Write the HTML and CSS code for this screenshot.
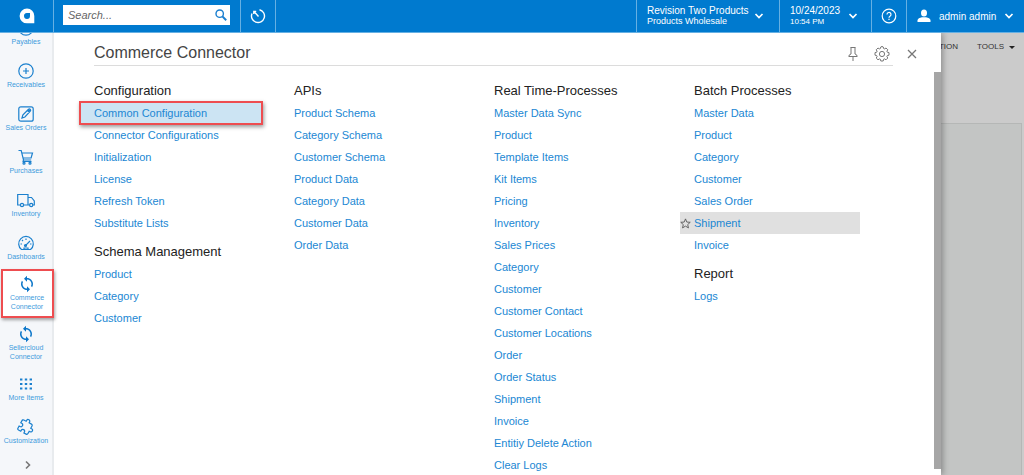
FILE: index.html
```html
<!DOCTYPE html>
<html lang="en">
<head>
<meta charset="utf-8">
<title>Commerce Connector</title>
<link rel="stylesheet" href="styles.css">
</head>
<body>
<svg class="defs" aria-hidden="true">
  <symbol id="sync" viewBox="0 0 24 24"><path stroke="none" fill="currentColor" d="M12 4V1L8 5l4 4V6c3.310 0 6 2.690 6 6 0 1.010-.25 1.970-.7 2.800l1.460 1.460C19.540 15.030 20 13.570 20 12c0-4.420-3.580-8-8-8zm0 14c-3.310 0-6-2.690-6-6 0-1.010.25-1.970.7-2.800L5.240 7.740C4.460 8.970 4 10.430 4 12c0 4.420 3.580 8 8 8v3l4-4-4-4v3z"/></symbol>
  <symbol id="chevron" viewBox="0 0 10 8"><path d="M1.500 2 5 5.500 8.500 2" fill="none" stroke="currentColor" stroke-width="1.700"/></symbol>
</svg>
<header class="topbar">
  <a class="logo" href="#" aria-label="Home"><svg width="16" height="16" viewBox="0 0 16 16"><path fill="#fff" fill-rule="evenodd" d="M8 .5A7.300 7.300 0 0 1 15.300 8v7.300H8A7.400 7.400 0 0 1 8 .5zM7.800 5a3 3 0 1 0 3.200 3V5z"/></svg></a>
  <form class="search">
    <input type="search" placeholder="Search..." aria-label="Search">
    <button type="button" aria-label="Search"><svg width="12" height="12" viewBox="0 0 12 12"><circle cx="4.700" cy="4.700" r="3.700" fill="none" stroke="currentColor" stroke-width="1.400"/><path d="m7.400 7.400 3.800 3.800" stroke="currentColor" stroke-width="2"/></svg></button>
  </form>
  <button class="cell history" type="button" aria-label="Recent"><svg width="16" height="16" viewBox="0 0 16 16" fill="none" stroke="currentColor" stroke-width="1.400"><path d="M9.500 1.700A6.500 6.500 0 1 1 2 5.500M8.500 8.500 4 3.500M3.800 6V3.400h2.400"/></svg></button>
  <button class="cell company" type="button"><span class="stack"><span>Revision Two Products</span><small class="branch">Products Wholesale</small></span><svg width="10" height="8"><use href="#chevron"/></svg></button>
  <button class="cell date" type="button"><span class="stack"><span>10/24/2023</span><small>10:54 PM</small></span><svg width="10" height="8"><use href="#chevron"/></svg></button>
  <button class="cell help" type="button" aria-label="Help"><svg width="16" height="16" viewBox="0 0 16 16" fill="none" stroke="currentColor" stroke-width="1.200"><circle cx="8" cy="8" r="6.800"/><path d="M6 6.500a2 2 0 1 1 3 1.700Q8 8.800 8 9.700M8 10.700V12"/></svg></button>
  <button class="cell user" type="button"><svg width="14" height="14" viewBox="0 0 14 14" fill="currentColor"><ellipse cx="7" cy="4" rx="3" ry="3.500"/><path d="M.5 13v-2Q1 9 5 8.200h4q4 .8 4.500 2.800v2z"/></svg><span>admin admin</span><svg width="10" height="8"><use href="#chevron"/></svg></button>
</header>
<div class="body">
  <nav class="sidebar" aria-label="Workspaces">
    <a class="item" href="#"><svg viewBox="0 0 18 18"><circle cx="9" cy="9" r="7.200"/><path d="M6 9h6"/></svg>Payables</a>
    <a class="item" href="#"><svg viewBox="0 0 18 18"><circle cx="9" cy="9" r="7.200"/><path d="M6 9h6M9 6v6"/></svg>Receivables</a>
    <a class="item" href="#"><svg viewBox="0 0 18 18"><rect x="1.800" y="1.800" width="14.400" height="14.400" rx="2"/><path d="m5 13 .8-3L11.500 4.300q1-.8 1.800 0t0 1.800L7.900 12zM10.500 5.500l2 2M11.500 4.500l2 2"/></svg>Sales Orders</a>
    <a class="item" href="#"><svg viewBox="0 0 18 18"><path d="M1.500 2.500h2.700L6.500 12h7.700M4.700 5h10.800l-1.400 5H6M6.500 12l-.4 1.500h8.400"/><circle cx="7" cy="15.200" r="1"/><circle cx="13" cy="15.200" r="1"/></svg>Purchases</a>
    <a class="item" href="#"><svg viewBox="0 0 18 18"><path d="M3.500 14H.7V3.500H11V14H6.500M11 6.500h3.500l2.800 3.500v4h-1.300M11 14h1.500"/><circle cx="5" cy="14" r="1.600"/><circle cx="14.200" cy="14" r="1.600"/></svg>Inventory</a>
    <a class="item" href="#"><svg viewBox="0 0 18 18"><path d="M4.500 15.500a7.300 7.300 0 1 1 9 0zM7 15.500v-1.500h4v1.500M8.200 11.800 13 7M3.500 10H5M9 4.500V6M5 6l1 1M13 10h1.500"/><circle cx="8.500" cy="11.500" r="1"/></svg>Dashboards</a>
    <a class="item current" href="#" aria-current="page"><svg><use href="#sync"/></svg>Commerce Connector</a>
    <a class="item" href="#"><svg><use href="#sync"/></svg>Sellercloud Connector</a>
    <a class="item" href="#"><svg viewBox="0 0 18 18"><path d="M3 4.500h12M3 9h12M3 13.500h12" stroke-width="2.200" stroke-dasharray="2.400"/></svg>More Items</a>
    <a class="item" href="#"><svg viewBox="-2 -1 27 27"><path transform="rotate(28 12 12)" stroke-width="1.800" d="M20.500 11H19V7c0-1.100-.9-2-2-2h-4V3.500a2.500 2.500 0 0 0-5 0V5H4c-1.100 0-2 .9-2 2v3.800h1.500a2.700 2.700 0 0 1 0 5.400H2V20c0 1.100.9 2 2 2h3.800v-1.500a2.700 2.700 0 0 1 5.400 0V22H17c1.100 0 2-.9 2-2v-4h1.500a2.500 2.500 0 0 0 0-5z"/></svg>Customization</a>
    <button class="expand" type="button" aria-label="Expand"><svg width="8" height="10" viewBox="0 0 8 10"><path d="m2 1.500 3.500 3.500L2 8.500" fill="none" stroke="currentColor" stroke-width="1.600"/></svg></button>
  </nav>
  <main class="page">
    <div class="page-menu"><button type="button">CUSTOMIZATION</button><button type="button">TOOLS <span class="caret"></span></button></div>
    <div class="page-content"></div>
    <section class="drawer">
      <div class="drawer-head">
        <h1>Commerce Connector</h1>
        <button class="tool" type="button" aria-label="Pin"><svg width="16" height="16" viewBox="0 0 16 16"><path d="M5.500 1.500h5M6 1.500V8Q3.800 8.500 3.800 10.500h8.400Q12.200 8.500 10 8V1.500M8 10.500V15"/></svg></button>
        <button class="tool" type="button" aria-label="Settings"><svg width="16" height="16" viewBox="0 0 16 16"><path d="m6.700 1 .3-.3h2l.3.300.3 1.500 1 .4 1.400-.9 1.800 1.800-.9 1.400.4 1 1.700.4v2.600l-1.700.4-.4 1 .9 1.400-1.800 1.800-1.400-.9-1 .4-.4 1.700H6.800l-.4-1.700-1-.4-1.400.9L2.200 12l.9-1.400-.4-1L1 9.200V6.600l1.700-.4.4-1-.9-1.400L4 2l1.400.9 1-.4z"/><circle cx="8" cy="8" r="2.600"/></svg></button>
      </div>
      <button class="close" type="button" aria-label="Close"><svg width="10" height="10" viewBox="0 0 10 10"><path d="m1 1 8 8M9 1 1 9" stroke="currentColor" stroke-width="1.300"/></svg></button>
      <div class="columns">
        <div class="column">
          <section><h2>Configuration</h2><ul>
            <li class="marked"><a href="#">Common Configuration</a></li><li><a href="#">Connector Configurations</a></li><li><a href="#">Initialization</a></li><li><a href="#">License</a></li><li><a href="#">Refresh Token</a></li><li><a href="#">Substitute Lists</a></li></ul></section>
          <section><h2>Schema Management</h2><ul>
            <li><a href="#">Product</a></li><li><a href="#">Category</a></li><li><a href="#">Customer</a></li></ul></section>
        </div>
        <div class="column">
          <section><h2>APIs</h2><ul>
            <li><a href="#">Product Schema</a></li><li><a href="#">Category Schema</a></li><li><a href="#">Customer Schema</a></li><li><a href="#">Product Data</a></li><li><a href="#">Category Data</a></li><li><a href="#">Customer Data</a></li><li><a href="#">Order Data</a></li></ul></section>
        </div>
        <div class="column">
          <section><h2>Real Time-Processes</h2><ul>
            <li><a href="#">Master Data Sync</a></li><li><a href="#">Product</a></li><li><a href="#">Template Items</a></li><li><a href="#">Kit Items</a></li><li><a href="#">Pricing</a></li><li><a href="#">Inventory</a></li><li><a href="#">Sales Prices</a></li><li><a href="#">Category</a></li><li><a href="#">Customer</a></li><li><a href="#">Customer Contact</a></li><li><a href="#">Customer Locations</a></li><li><a href="#">Order</a></li><li><a href="#">Order Status</a></li><li><a href="#">Shipment</a></li><li><a href="#">Invoice</a></li><li><a href="#">Entitiy Delete Action</a></li><li><a href="#">Clear Logs</a></li></ul></section>
        </div>
        <div class="column">
          <section><h2>Batch Processes</h2><ul>
            <li><a href="#">Master Data</a></li><li><a href="#">Product</a></li><li><a href="#">Category</a></li><li><a href="#">Customer</a></li><li><a href="#">Sales Order</a></li><li class="hovered"><button class="star" type="button" aria-label="Add to favorites"><svg width="11" height="11" viewBox="0 0 10 10"><path d="m5 .8 1.200 2.900 3.100.2L7 6l.7 3L5 7.400 2.300 9 3 6 .7 3.900l3.100-.2z" fill="none" stroke="currentColor" stroke-width=".8"/></svg></button><a href="#">Shipment</a></li><li><a href="#">Invoice</a></li></ul></section>
          <section><h2>Report</h2><ul><li><a href="#">Logs</a></li></ul></section>
        </div>
      </div>
      <div class="scrollbar"></div>
    </section>
  </main>
</div>
</body>
</html>
```
FILE: styles.css
```css
* { box-sizing: border-box; }
body {
  margin: 0;
  height: 100vh;
  display: flex;
  flex-direction: column;
  overflow: hidden;
  font-family: "Liberation Sans", Arial, sans-serif;
  font-size: 11px;
}
button {
  margin: 0;
  padding: 0;
  border: 0;
  background: none;
  color: inherit;
  font: inherit;
}
a { color: inherit; text-decoration: none; }
svg { display: block; flex: none; }
h1, h2, ul { margin: 0; padding: 0; font-weight: normal; }
.defs { position: absolute; width: 0; height: 0; }

/* Top bar */
.topbar {
  position: relative;
  z-index: 2;
  display: flex;
  height: 33px;
  flex: none;
  background: #007acf;
  border-bottom: 1px solid #66b0e3;
  color: #fff;
  font-size: 10px;
}
.logo {
  width: 54px;
  display: flex;
  align-items: center;
  justify-content: center;
  border-right: 1px solid #66b0e3;
}
.search {
  display: flex;
  width: 167px;
  height: 20px;
  margin: 5px 10px 0 9px;
  background: #fff;
}
.search input {
  flex: 1;
  min-width: 0;
  padding: 0 5px;
  border: 0;
  background: none;
  font: italic 11px "Liberation Sans", Arial, sans-serif;
}
.search input::placeholder { color: #666; }
.search button {
  display: flex;
  width: 15px;
  align-items: center;
  padding-bottom: 1px;
  color: #1a7fd0;
}
.cell {
  display: flex;
  align-items: center;
  border-left: 1px solid #66b0e3;
}
.history {
  width: 36px;
  justify-content: center;
  border-right: 1px solid #66b0e3;
  margin-right: auto;
}
.stack { display: flex; flex-direction: column; text-align: left; line-height: 11px; }
.stack small { font-size: 8px; line-height: 12px; }
.stack .branch { font-size: 9px; line-height: 11px; }
.company { width: 143px; padding-left: 10px; gap: 5px; }
.date { width: 92px; padding-left: 10px; gap: 8px; }
.help { width: 35px; justify-content: center; }
.user { width: 118px; padding-left: 10px; gap: 8px; }

/* Workspace sidebar */
.body { display: flex; flex: 1; min-height: 0; }
.sidebar {
  position: relative;
  z-index: 1;
  width: 54px;
  flex: none;
  display: flex;
  flex-direction: column;
  background: #f5f7fa;
  border-right: 2px solid #e8ebee;
  color: #3d9bdc;
  font-size: 7px;
  line-height: 9px;
  text-align: center;
}
.item {
  display: flex;
  flex: none;
  flex-direction: column;
  align-items: center;
  min-height: 43px;
  padding: 5px 0 9px;
}
.item:first-child { margin-top: -19px; }
.item svg {
  width: 18px;
  height: 18px;
  fill: none;
  stroke: #1b80ce;
  stroke-width: 1.2;
  color: #0b76c9;
}
.item.current {
  margin: -3px -2px 2px 1px;
  padding: 4px 4px 5px 3px;
  background: #fff;
  border: 2px solid #ee4d50;
  box-shadow: 1px 2px 3px rgba(0, 0, 0, .35);
}
.expand { display: flex; justify-content: center; padding: 4px 0 4px 4px; color: #777; }

/* Page behind the drawer */
.page { position: relative; flex: 1; min-width: 0; display: flex; flex-direction: column; background: #cbcbcb; }
.page-menu {
  display: flex;
  justify-content: flex-end;
  gap: 19px;
  height: 90px;
  padding: 9px 9px 0 0;
  color: #333;
  font-size: 8px;
  line-height: 10px;
}
.page-menu button { display: flex; gap: 5px; height: 10px; align-items: center; }
.caret { border: 3px solid transparent; border-top-color: #222; border-bottom: 0; }
.page-content { flex: 1; margin-right: 2px; background: #c3c5c4; border: 1px solid #b5b7b6; border-bottom: 0; }

/* Workspace drawer */
.drawer {
  position: absolute;
  inset: 0 83px 0 0;
  background: #fff;
  box-shadow: 2px 0 6px rgba(0, 0, 0, .3);
}
.drawer-head {
  display: flex;
  align-items: center;
  gap: 13px;
  height: 33px;
  margin: 0 48px 0 40px;
  padding: 5px 3px 0 0;
  border-bottom: 1px solid #dcdcdc;
}
h1 { flex: 1; padding-top: 2px; font-size: 16px; line-height: 20px; color: #444; }
.tool { padding-top: 4px; }
.tool svg { fill: none; stroke: #777; stroke-width: 1; }
.close { position: absolute; top: 16px; right: 24px; color: #777; }
.columns {
  display: grid;
  grid-template-columns: repeat(4, minmax(0, 1fr));
  column-gap: 20px;
  padding: 13px 81px 0 26px;
}
.column { display: flex; flex-direction: column; gap: 6px; }
h2 { padding-left: 14px; font-size: 13px; line-height: 23px; color: #222; }
ul { list-style: none; line-height: 22px; color: #2187d3; }
li { padding-left: 14px; }
.marked {
  margin-right: -2px;
  background: #cce4f3;
  outline: 2px solid #ee4d50;
  outline-offset: -1px;
  box-shadow: 1px 2px 4px 1px rgba(0, 0, 0, .4);
}
.hovered { display: flex; background: #e0e0e0; padding-left: 0; }
.star { width: 14px; color: #555; display: flex; align-items: center; }
.scrollbar { position: absolute; top: 39px; right: 0; bottom: 6px; width: 7px; background: #a6a6a6; }
```
